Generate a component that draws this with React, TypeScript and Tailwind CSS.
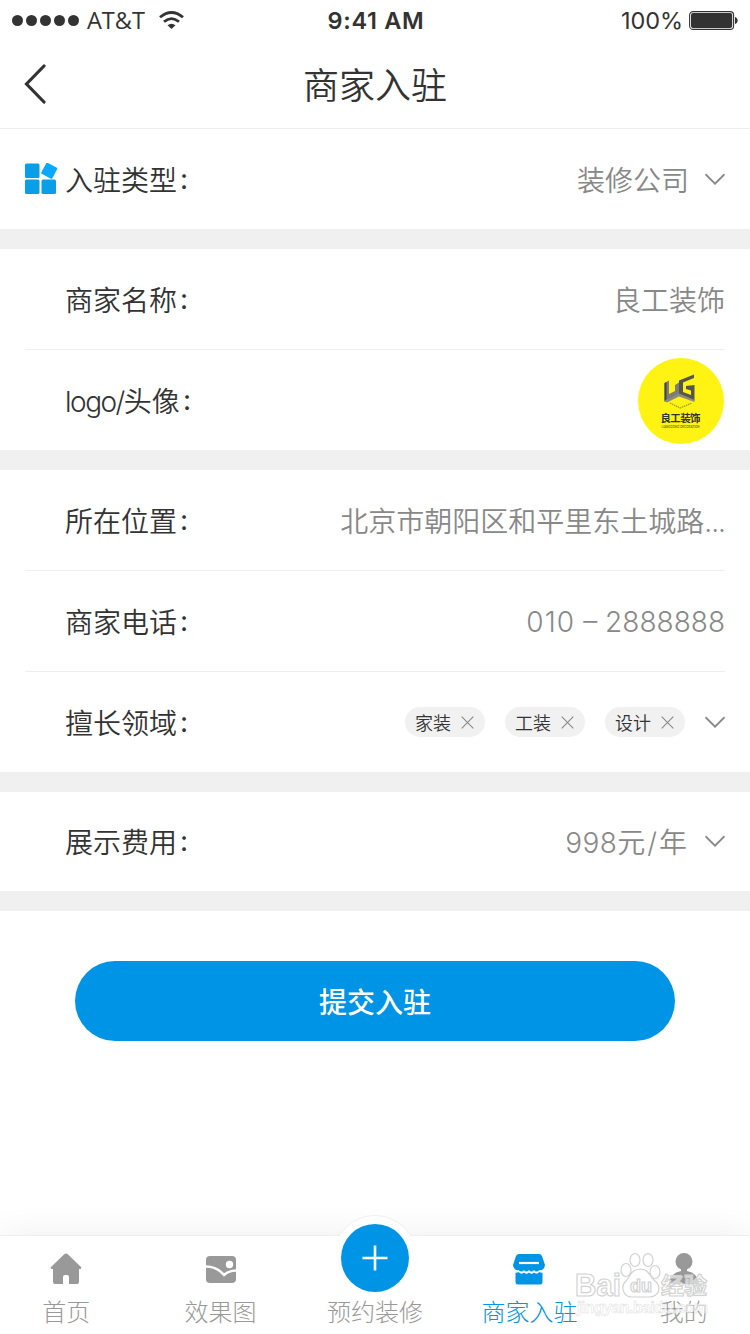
import React from 'react'

function Chevron() {
  return (
    <svg className="h-[13px] w-5" viewBox="0 0 20 13" fill="none">
      <path d="M.5 1.2L10 10.7L19.5 1.2" stroke="#888" strokeWidth="1.8" />
    </svg>
  )
}

function Row({
  label,
  icon,
  children,
}: {
  label: React.ReactNode
  icon?: React.ReactNode
  children: React.ReactNode
}) {
  return (
    <div className="box-content flex h-[100px] items-center">
      <div className="w-10 shrink-0">{icon}</div>
      <div className="flex pt-[3px] text-[#333]">
        {label}
        <span className="-mt-[2px] ml-[3px] font-normal">:</span>
      </div>
      <div className="ml-auto flex items-center text-[#888]">{children}</div>
    </div>
  )
}

function Tag({ text }: { text: string }) {
  return (
    <div className="mr-5 flex h-[30px] w-20 items-center justify-between rounded-full bg-[#f1f1f1] pl-[10px] pr-[11px] text-[18px] text-[#333]">
      <span className="pt-[3px]">{text}</span>
      <svg className="h-[13px] w-[13px]" viewBox="0 0 13 13" fill="none">
        <path d="M.7.7L12.3 12.3M12.3.7L.7 12.3" stroke="#888" strokeWidth="1.1" />
      </svg>
    </div>
  )
}

function Tab({
  label,
  active,
  children,
}: {
  label: string
  active?: boolean
  children?: React.ReactNode
}) {
  return (
    <div
      className={
        active
          ? 'flex flex-col items-center pt-[16px] text-[#0094e7]'
          : 'flex flex-col items-center pt-[16px] text-[#999]'
      }
    >
      <div className="flex h-[34px] items-center">{children}</div>
      <span className="mt-[12px] text-[24px] leading-[30px]">{label}</span>
    </div>
  )
}

function Logo() {
  return (
    <div className="mr-px mt-[2px] h-[86px] w-[86px] rounded-full bg-[#fff314]">
      <svg className="h-full w-full" viewBox="0 0 86 86">
        <g transform="translate(26 16)">
          <path d="M.5 9L5 6.500V20L11 17V11L15 8.500V21L.5 28Z" fill="#7d7d75" />
          <path d="M.5 9L2.500 8V25L.5 27Z" fill="#45453f" />
          <path d="M15 6.500L30 .5V4L19 8.500V18L27 21V16.500L22 15V12L30.500 11V26.500L15 20Z" fill="#55554d" />
          <path d="M.5 27L15 19.500L30.500 26V28L15 22.500L3 28.500Z" fill="#8b8b81" />
          <path d="M6 29L16 34L28 29" fill="none" stroke="#a39d30" strokeWidth="1.3" strokeDasharray="1.5 .7" />
        </g>
        <text x="22.5" y="64" textLength="40" fontSize="10.5" fontWeight="700" fill="#333">
          良工装饰
        </text>
        <text x="23.5" y="70" textLength="38" lengthAdjust="spacingAndGlyphs" fontSize="4" fontWeight="500" fill="#66611c">
          LIANGGONG DECORATION
        </text>
      </svg>
    </div>
  )
}

function Watermark() {
  return (
    <svg
      className="absolute bottom-0 left-[570px] h-[90px] w-[150px]"
      viewBox="0 0 150 90"
      fill="#fff"
      fillOpacity=".6"
      stroke="#d2d2d2"
      strokeWidth="1.2"
    >
      <ellipse cx="65" cy="16" rx="5" ry="6.5" />
      <ellipse cx="78" cy="16" rx="5" ry="6.5" />
      <ellipse cx="56" cy="26" rx="5" ry="6.5" />
      <ellipse cx="85" cy="28" rx="5" ry="6.5" />
      <path d="M70 25C61 25 60 33 56 37C50 42 53 53 62 53H79C89 53 92 43 85 37C79 32 79 25 70 25Z" />
      <g fontFamily="Liberation Sans, Noto Sans CJK SC, sans-serif" fontWeight="700">
        <text x="5" y="52" fontSize="32" textLength="46" lengthAdjust="spacingAndGlyphs">
          Bai
        </text>
        <text x="60" y="48" fontSize="18">
          du
        </text>
        <text x="91" y="50" fontSize="23">
          经验
        </text>
        <text x="7" y="69" fontSize="16" textLength="131" strokeWidth=".5" stroke="#ddd">
          jingyan.baidu.com
        </text>
      </g>
    </svg>
  )
}

function App() {
  return (
    <div className="relative flex h-[1334px] w-[750px] flex-col overflow-hidden bg-white font-['Inter','Noto_Sans_CJK_SC',sans-serif] text-[28px] font-[350] leading-none">
      {/* Status bar */}
      <div className="grid h-10 grid-cols-3 items-center pl-3 pr-[12px] text-[24px] text-[#333]">
        <div className="flex items-center font-['Open_Sans',sans-serif] font-normal">
          <div className="flex gap-[3px]">
            <i className="h-[11px] w-[11px] rounded-full bg-[#333]" />
            <i className="h-[11px] w-[11px] rounded-full bg-[#333]" />
            <i className="h-[11px] w-[11px] rounded-full bg-[#333]" />
            <i className="h-[11px] w-[11px] rounded-full bg-[#333]" />
            <i className="h-[11px] w-[11px] rounded-full bg-[#333]" />
          </div>
          <span className="ml-2 pt-[2px] text-[23.5px]">AT&amp;T</span>
          <svg className="ml-[14px] h-[18px] w-[25px]" viewBox="0 0 25 18" fill="none" stroke="#333" strokeWidth="2.8">
            <path d="M1 6.3Q12.5 -3.3 24 6.3" />
            <path d="M5 10.8Q12.5 4.4 20 10.8" />
            <path d="M8.5 14.3Q12.5 11 16.5 14.3L12.5 18Z" fill="#333" stroke="none" />
          </svg>
        </div>
        <span className="pl-[2px] pt-[2px] text-center text-[23.5px] font-semibold tracking-[.7px]">9:41 AM</span>
        <div className="flex items-center justify-end">
          <span className="pt-[2px] text-[23.5px] font-normal tracking-[-.1px]">100%</span>
          <svg className="ml-[6px] h-[19px] w-[49px]" viewBox="0 0 49 19">
            <rect x=".6" y=".6" width="44" height="17.8" rx="3.5" fill="none" stroke="#333" strokeWidth="1.1" />
            <rect x="2" y="2" width="41.2" height="15" rx="2" fill="#333" />
            <path d="M46 6C49.5 7 49.5 12 46 13Z" fill="#333" />
          </svg>
        </div>
      </div>

      {/* Header */}
      <header className="grid h-[89px] grid-cols-3 items-center border-b border-[#ececec] px-6 text-[#333]">
        <svg className="h-10 w-[22px]" viewBox="0 0 22 40" fill="none">
          <path d="M20 2L2.5 20L20 38" stroke="#333" strokeWidth="3.2" strokeLinecap="round" />
        </svg>
        <h1 className="pt-[3px] text-center text-[36px]">商家入驻</h1>
      </header>

      {/* Form */}
      <main className="divide-y-[20px] divide-[#f0f0f0] border-b-[20px] border-[#f0f0f0]">
        <section className="px-[25px]">
          <Row
            label="入驻类型"
            icon={
              <svg className="h-[32px] w-[33px]" viewBox="0 0 33 32" fill="#0a9de8">
                <rect y=".5" width="14.5" height="14.5" rx="1.5" />
                <rect y="16.5" width="14.5" height="14.5" rx="1.5" />
                <rect x="16.5" y="16.5" width="14.5" height="14.5" rx="1.5" />
                <rect x="18" y="1.5" width="12.5" height="12.5" rx="1.5" transform="rotate(28 24.2 7.7)" fill="#08aaff" />
              </svg>
            }
          >
            <span className="mr-4 pt-[3px]">装修公司</span>
            <Chevron />
          </Row>
        </section>
        <section className="divide-y divide-[#eee] px-[25px]">
          <Row label="商家名称">
            <span className="pt-[3px]">良工装饰</span>
          </Row>
          <Row
            label={
              <>
                <span className="tracking-[-1.5px]">logo/</span>头像
              </>
            }
          >
            <Logo />
          </Row>
        </section>
        <section className="divide-y divide-[#eee] px-[25px]">
          <Row label="所在位置">
            <span className="pt-[3px]">
              北京市朝阳区和平里东土城路<span className="tracking-[-1px]">...</span>
            </span>
          </Row>
          <Row label="商家电话">
            <span className="pt-px">
              <span className="tracking-[1.2px]">010</span> – 2888888
            </span>
          </Row>
          <Row label="擅长领域">
            <Tag text="家装" />
            <Tag text="工装" />
            <Tag text="设计" />
            <Chevron />
          </Row>
        </section>
        <section className="-mt-px px-[25px]">
          <Row label="展示费用">
            <span className="mr-[18px] pt-[3px]">
              <span className="tracking-[.4px]">998</span>元<span className="px-[2px]">/</span>年
            </span>
            <Chevron />
          </Row>
        </section>
      </main>

      <button className="mx-auto mt-[50px] h-20 w-[600px] shrink-0 rounded-full bg-[#0094e7] pt-1 text-[28px] font-medium text-white">
        提交入驻
      </button>

      {/* Bottom tabs */}
      <nav className="relative mt-auto h-[99px] border-t border-[#eee] bg-white font-light shadow-[0_-4px_30px_rgba(0,0,0,0.06)]">
        <div className="absolute -top-[21px] left-[333px] h-[84px] w-[84px] rounded-full border border-[#f0f0f0] bg-white" />
        <div className="relative -mx-[11px] grid h-full grid-cols-5 bg-white">
          <Tab label="首页">
            <svg className="h-[32px] w-[32px]" viewBox="0 0 32 32" fill="currentColor">
              <path d="M14.5 1Q16 0 17.5 1L31 14Q32 16 30 16H29V29Q29 31 27 31H19V24Q19 22 17 22H15Q13 22 13 24V31H5Q3 31 3 29V16H2Q0 16 1 14Z" />
            </svg>
          </Tab>
          <Tab label="效果图">
            <svg className="h-[27px] w-[30px]" viewBox="0 0 30 27">
              <rect width="30" height="27" rx="4" fill="currentColor" />
              <circle cx="23.5" cy="8.5" r="3.7" fill="#fff" />
              <path d="M0 10.5Q11 10.5 18 19Q23 14.5 30 14.5" fill="none" stroke="#fff" strokeWidth="2.4" />
            </svg>
          </Tab>
          <Tab label="预约装修" />
          <Tab label="商家入驻" active>
            <svg className="h-[31px] w-[32px]" viewBox="0 0 32 31">
              <path
                d="M6 0H26Q28 0 29 2L32 11Q31 17 26.5 16Q23.5 19 21 16Q18.5 19 16 16Q13.5 19 11 16Q8.5 19 5.5 16Q1 17 0 11L3 2Q4 0 6 0Z"
                fill="currentColor"
              />
              <path
                d="M2.5 18.5Q4 19 5.5 18Q8.5 21 11 18.5Q13.5 21 16 18.5Q18.5 21 21 18.5Q23.5 21 26.5 18Q28 19 29.5 18.5V28Q29.5 30.5 27 30.5H5Q2.5 30.5 2.5 28Z"
                fill="currentColor"
              />
              <path d="M6 9H26" stroke="#fff" strokeWidth="2.2" />
            </svg>
          </Tab>
          <Tab label="我的">
            <svg className="h-[32px] w-[30px]" viewBox="0 0 30 32" fill="currentColor">
              <circle cx="15" cy="8.5" r="8.5" />
              <path d="M12 15H18V18Q29 20 30 31H0Q1 20 12 18Z" />
            </svg>
          </Tab>
        </div>
        <div className="absolute -top-[12px] left-[341px] flex h-[68px] w-[68px] items-center justify-center rounded-full bg-[#0094e7]">
          <svg className="h-[26px] w-[26px]" viewBox="0 0 26 26">
            <path d="M13 .5V25.5M.5 13H25.5" stroke="#fff" strokeWidth="2.6" />
          </svg>
        </div>
      </nav>
      <Watermark />
    </div>
  )
}

export default App
